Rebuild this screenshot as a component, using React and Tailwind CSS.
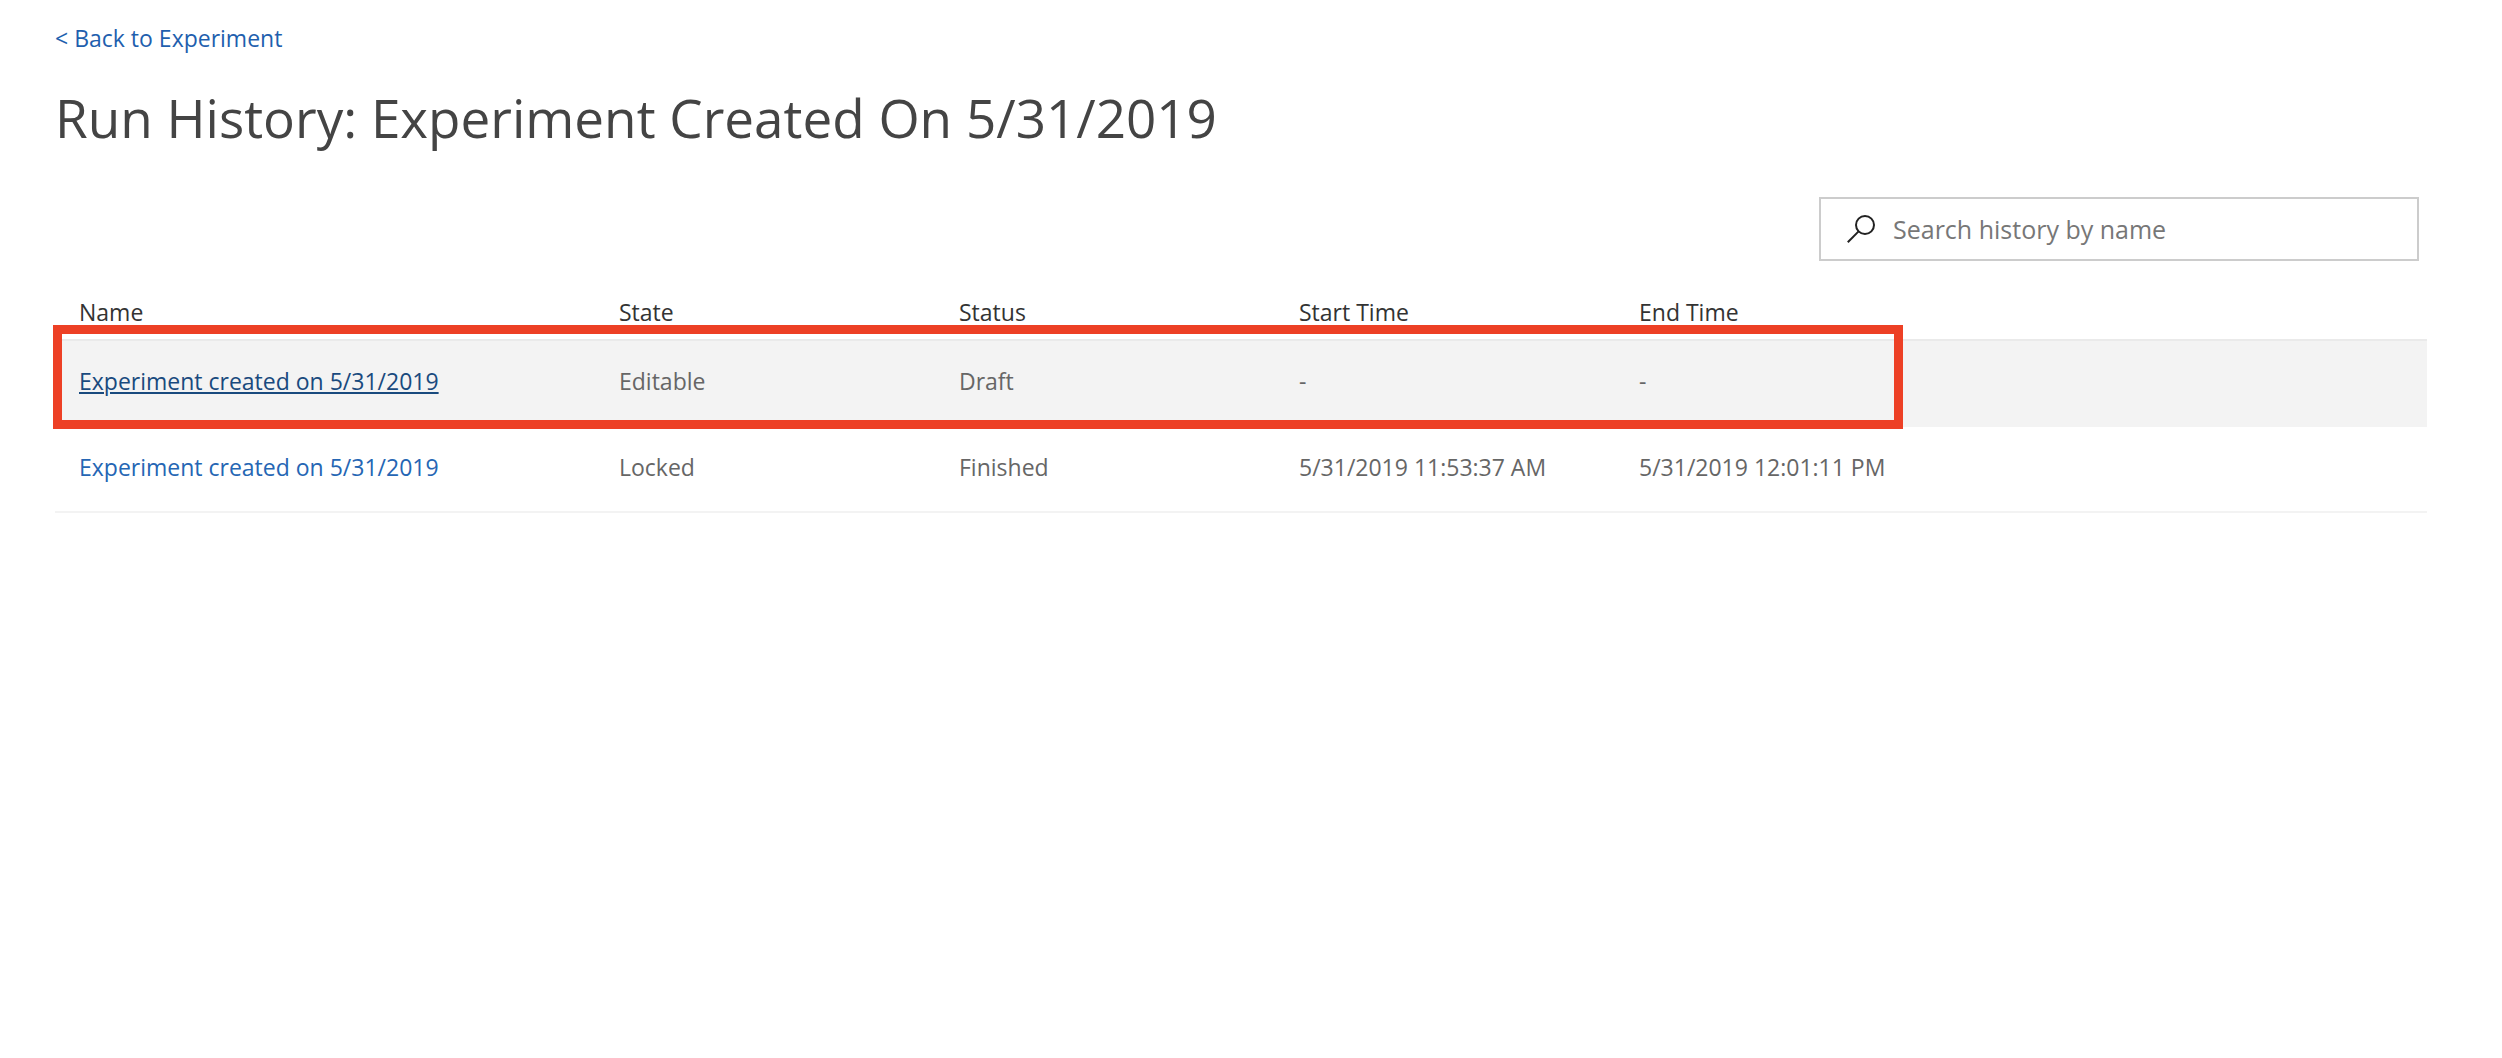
const columns = ["Name", "State", "Status", "Start Time", "End Time"];

const runs = [
  {
    name: "Experiment created on 5/31/2019",
    cells: ["Editable", "Draft", "-", "-"],
    active: true,
  },
  {
    name: "Experiment created on 5/31/2019",
    cells: ["Locked", "Finished", "5/31/2019 11:53:37 AM", "5/31/2019 12:01:11 PM"],
    active: false,
  },
];

function SearchIcon() {
  return (
    <svg viewBox="0 0 28 28" className="size-7 shrink-0" fill="none" stroke="#222222" strokeWidth="2" aria-hidden="true">
      <circle cx="18" cy="10" r="9" />
      <path d="M11.6 16.4 0.8 27.2" />
    </svg>
  );
}

export default function App() {
  return (
    <main className="min-h-screen bg-white pt-5 pr-[75px] pl-[55px] font-['Open_Sans','Noto_Sans',sans-serif] text-[23px] leading-9 text-[#666666]">
      <a href="#experiment" className="block w-fit font-medium text-[#1f5fae]">
        &lt; Back to Experiment
      </a>
      <h1 className="mt-[22px] text-[53px] leading-[80px] text-[#444444]">
        Run History: Experiment Created On 5/31/2019
      </h1>

      <label className="mt-[39px] mr-2 ml-auto flex h-16 w-[600px] items-center gap-[18px] border-2 border-[#cccccc] pl-[26px]">
        <SearchIcon />
        <input
          type="text"
          aria-label="Search history by name"
          placeholder="Search history by name"
          className="w-full bg-transparent text-[25px] text-[#333333] outline-none placeholder:text-[#777777]"
        />
      </label>

      <table className="mt-[33px] w-full table-fixed border-separate border-spacing-0 text-left">
        <colgroup>
          <col className="w-[540px]" />
          <col className="w-[340px]" />
          <col className="w-[340px]" />
          <col className="w-[340px]" />
          <col />
        </colgroup>
        <thead>
          <tr className="h-[47px] align-top text-[#333333]">
            {columns.map((column) => (
              <th key={column} scope="col" className="border-b-2 border-[#eaeaea] pl-6 font-normal">
                {column}
              </th>
            ))}
          </tr>
        </thead>
        <tbody>
          {runs.map((run, index) => (
            <tr
              key={index}
              className={run.active ? "relative h-[86px] bg-[#f3f3f3]" : "h-[86px]"}
            >
              <td className="border-b-2 border-[#f3f3f3] pb-1 pl-6">
                <a
                  href="#run"
                  className={
                    run.active
                      ? "text-[#194a7e] underline decoration-2 underline-offset-2"
                      : "text-[#2566b4]"
                  }
                >
                  {run.name}
                </a>
                {run.active && (
                  <div className="pointer-events-none absolute -top-4 -left-0.5 h-[104px] w-[1850px] border-[9px] border-[#ed4025]" />
                )}
              </td>
              {run.cells.map((cell, cellIndex) => (
                <td key={cellIndex} className="border-b-2 border-[#f3f3f3] pb-1 pl-6">
                  {cell}
                </td>
              ))}
            </tr>
          ))}
        </tbody>
      </table>
    </main>
  );
}
